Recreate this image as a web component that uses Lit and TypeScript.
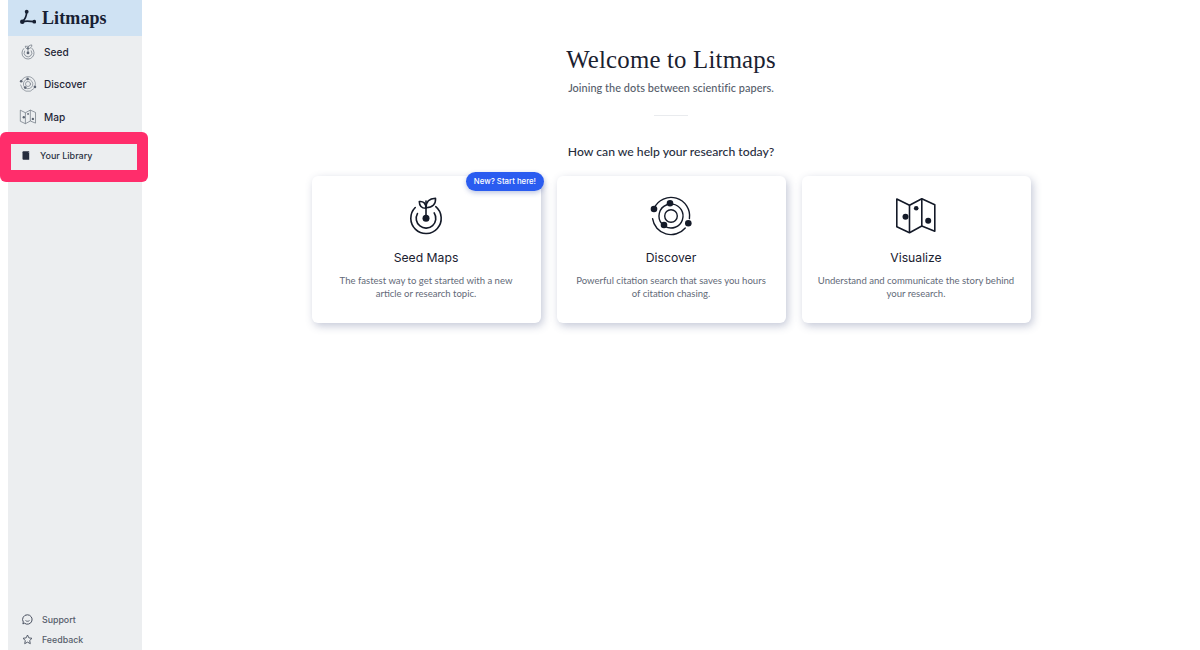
import { LitElement, html, css, svg } from "lit";
import { customElement } from "lit/decorators.js";

function arc(cx: number, cy: number, r: number, from: number, to: number) {
  const pt = (deg: number) => {
    const t = (deg * Math.PI) / 180;
    return `${(cx + r * Math.cos(t)).toFixed(2)} ${(cy + r * Math.sin(t)).toFixed(2)}`;
  };
  const large = to - from > 180 ? 1 : 0;
  return `M${pt(from)}A${r} ${r} 0 ${large} 1 ${pt(to)}`;
}

const seedIcon = svg`
  <g fill="none" stroke="currentColor" stroke-width="1.6" stroke-linecap="round" stroke-linejoin="round">
    <path d=${arc(25, 27.3, 15.2, 310, 585)}/>
    <path d=${arc(25, 27.3, 9.8, 327, 569)}/>
    <path d="M25 27V10"/>
    <path d="M25 17.3C20.5 17.5 18.3 14.5 18.3 10.5C22.5 10 25 12.5 25 17.3Z"/>
    <path d="M25 16.7C25 11 28 7.5 34.5 7.3C35 12.5 32 16.7 25 16.7Z"/>
  </g>
  <circle cx="25" cy="27.3" r="3.5" fill="currentColor"/>`;

const discoverIcon = svg`
  <g fill="none" stroke="currentColor" stroke-width="1.4" stroke-linecap="round">
    <path d=${arc(25, 25, 18.6, 205, 368)}/>
    <path d=${arc(25, 25, 18.6, 40, 172)}/>
    <path d=${arc(25, 25, 12, 278, 480)}/>
    <path d=${arc(25, 25, 12, 138, 250)}/>
    <circle cx="25" cy="25" r="6.3"/>
  </g>
  <circle cx="24" cy="12.3" r="3.3" fill="currentColor"/>
  <circle cx="8" cy="18" r="3.3" fill="currentColor"/>
  <circle cx="18" cy="34" r="3.3" fill="currentColor"/>
  <circle cx="42.3" cy="32.3" r="3.3" fill="currentColor"/>`;

const mapIcon = svg`
  <path d="M5.8 8L18.5 14.3L30.8 7.7L43.8 13.7V40.3L30.800 35L18.5 41.700L5.8 35.7Z" fill="none" stroke="currentColor" stroke-width="1.6" stroke-linejoin="round"/>
  <path d="M18.5 14.3V41.7M30.8 7.7V35" fill="none" stroke="currentColor" stroke-width="1.6"/>
  <circle cx="14.5" cy="25.7" r="3" fill="currentColor"/>
  <circle cx="25.2" cy="17.3" r="2.3" fill="currentColor"/>
  <circle cx="37.2" cy="29.7" r="3" fill="currentColor"/>`;

@customElement("app-root")
export class AppRoot extends LitElement {
  static styles = css`
    :host {
      display: block;
      height: 650px;
      background: #fff;
      font-family: "Lato", "Inter", sans-serif;
      color: #1c2333;
      overflow: hidden;
    }
    .page { display: flex; height: 650px; padding-left: 8px; box-sizing: border-box; }
    .side {
      position: relative;
      width: 134px;
      flex: none;
      background: #eceef0;
      display: flex;
      flex-direction: column;
    }
    .logo {
      height: 36px;
      background: #cfe2f3;
      display: flex;
      align-items: center;
      gap: 6px;
      padding-left: 10px;
      font-family: "Liberation Serif", serif;
      font-weight: 700;
      font-size: 18px;
      letter-spacing: 0.1px;
      color: #172033;
    }
    .logo svg { display: block; }
    .nav { display: flex; flex-direction: column; margin-top: -0.5px; }
    .nav a {
      height: 32.5px;
      display: flex;
      align-items: center;
      gap: 6px;
      padding-left: 10px;
      font-family: "Inter", sans-serif;
      font-size: 10.1px;
      font-weight: 500;
      color: #1f2637;
    }
    .nav svg { color: #5c6472; display: block; width: 20px; height: 20px; }
    .library {
      position: absolute;
      left: -8px;
      top: 132px;
      width: 148px;
      height: 50px;
      box-sizing: border-box;
      background: #ff2d6b;
      border-radius: 6px;
      padding: 12px 11px;
    }
    .library div {
      height: 26px;
      box-sizing: border-box;
      padding: 0 0 3px 11px;
      background: #eceef0;
      display: flex;
      align-items: center;
      gap: 10px;
      font-family: "Inter", sans-serif;
      font-size: 9px;
      font-weight: 500;
      color: #2b3242;
    }
    .foot {
      margin-top: auto;
      display: flex;
      flex-direction: column;
      gap: 6.5px;
      padding-left: 14px;
      margin-bottom: 3.5px;
    }
    .foot div {
      display: flex;
      align-items: center;
      gap: 9px;
      height: 14px;
      font-family: "Inter", sans-serif;
      font-size: 8.8px;
      font-weight: 500;
      color: #565d6b;
    }
    .foot svg { display: block; color: #4a5160; }
    .main {
      flex: 1;
      display: flex;
      flex-direction: column;
      align-items: center;
      padding-top: 43px;
    }
    h1 {
      margin: 0;
      font-family: "Liberation Serif", serif;
      font-weight: 400;
      font-size: 24.8px;
      line-height: 34px;
      letter-spacing: 0.2px;
      color: #1a2130;
    }
    .sub {
      margin: 3px 0 0;
      font-family: "Lato", sans-serif;
      font-size: 10.9px;
      font-weight: 500;
      line-height: 16px;
      letter-spacing: 0.05px;
      color: #555c6a;
    }
    .rule { width: 34px; height: 1px; background: #e9ebee; margin: 19px 0 0; }
    h2 {
      margin: 27px 0 0;
      font-family: "Lato", sans-serif;
      font-weight: 500;
      font-size: 12.2px;
      line-height: 18px;
      color: #262d3d;
    }
    .cards { display: flex; gap: 16px; margin-top: 15px; }
    .card {
      position: relative;
      width: 229px;
      height: 147px;
      box-sizing: border-box;
      background: #fff;
      border-radius: 6px;
      box-shadow: 2px 3px 9px rgba(70, 85, 130, 0.32);
      display: flex;
      flex-direction: column;
      align-items: center;
      text-align: center;
      padding-top: 15px;
    }
    .card svg { display: block; width: 50px; height: 50px; color: #141a28; }
    .card h3 {
      margin: 8px 0 0;
      font-family: "Inter", sans-serif;
      font-size: 12.2px;
      line-height: 18px;
      font-weight: 400;
      color: #1a2130;
    }
    .card p {
      margin: 6.5px 0 0;
      font-family: "Lato", sans-serif;
      font-size: 9.55px;
      line-height: 13px;
      white-space: nowrap;
      color: #636a78;
    }
    .badge {
      position: absolute;
      right: -3.5px;
      top: -4.5px;
      height: 19.5px;
      padding: 0 8px;
      border-radius: 10px;
      background: #2a5cf0;
      color: #fff;
      display: flex;
      align-items: center;
      font-family: "Inter", sans-serif;
      font-size: 7.8px;
      font-weight: 500;
      box-shadow: 0 2px 5px rgba(40, 70, 160, 0.3);
    }
  `;

  private card(icon: unknown, title: string, a: string, b: string, badge = false) {
    return html`<div class="card">
      ${badge ? html`<span class="badge">New? Start here!</span>` : ""}
      <svg viewBox="0 0 50 50">${icon}</svg>
      <h3>${title}</h3>
      <p>${a}<br />${b}</p>
    </div>`;
  }

  private navItem(icon: unknown, label: string) {
    return html`<a><svg viewBox="0 0 50 50">${icon}</svg>${label}</a>`;
  }

  render() {
    return html`<div class="page">
      <aside class="side">
        <div class="logo">
          <svg width="18" height="18" viewBox="0 0 18 18">
            <path d="M8.7 2.7C8.5 7 7 10.5 4.3 12.7C8 11.5 12 12 16.3 12.7" fill="none" stroke="#172033" stroke-width="1.7"/>
            <circle cx="8.7" cy="2.7" r="1.9" fill="#172033"/>
            <circle cx="4.3" cy="12.7" r="2.3" fill="#172033"/>
            <circle cx="16.3" cy="12.7" r="1.9" fill="#172033"/>
          </svg>
          Litmaps
        </div>
        <nav class="nav">
          ${this.navItem(seedIcon, "Seed")}
          ${this.navItem(discoverIcon, "Discover")}
          ${this.navItem(mapIcon, "Map")}
        </nav>
        <div class="library">
          <div>
            <svg width="8" height="9" viewBox="0 0 8 9">
              <path d="M0.5 1.2C0.5 0.7 0.9 0.3 1.4 0.3H7.2V8.7H1.4C0.9 8.7 0.5 8.3 0.5 7.8Z" fill="#262d3d"/>
              <path d="M6 1.5H7" stroke="#8a90a0" stroke-width="0.6"/>
            </svg>
            Your Library
          </div>
        </div>
        <div class="foot">
          <div>
            <svg width="11" height="11" viewBox="0 0 11 11">
              <path d="M5.5 0.8A4.7 4.7 0 1 1 2.5 9.2L0.9 9.9L1.3 8A4.7 4.7 0 0 1 5.5 0.8Z" fill="none" stroke="currentColor" stroke-width="1"/>
              <path d="M3.5 6.5C4.5 7.5 6.5 7.5 7.5 6.5" fill="none" stroke="currentColor" stroke-width="0.9"/>
            </svg>
            Support
          </div>
          <div>
            <svg width="11" height="11" viewBox="0 0 11 11">
              <path d="M5.5 1L6.9 3.9L10 4.3L7.7 6.5L8.3 9.7L5.5 8.1L2.7 9.7L3.3 6.5L1 4.3L4.1 3.9Z" fill="none" stroke="currentColor" stroke-width="0.9" stroke-linejoin="round"/>
            </svg>
            Feedback
          </div>
        </div>
      </aside>
      <main class="main">
        <h1>Welcome to Litmaps</h1>
        <p class="sub">Joining the dots between scientific papers.</p>
        <div class="rule"></div>
        <h2>How can we help your research today?</h2>
        <div class="cards">
          ${this.card(seedIcon, "Seed Maps", "The fastest way to get started with a new", "article or research topic.", true)}
          ${this.card(discoverIcon, "Discover", "Powerful citation search that saves you hours", "of citation chasing.")}
          ${this.card(mapIcon, "Visualize", "Understand and communicate the story behind", "your research.")}
        </div>
      </main>
    </div>`;
  }
}
